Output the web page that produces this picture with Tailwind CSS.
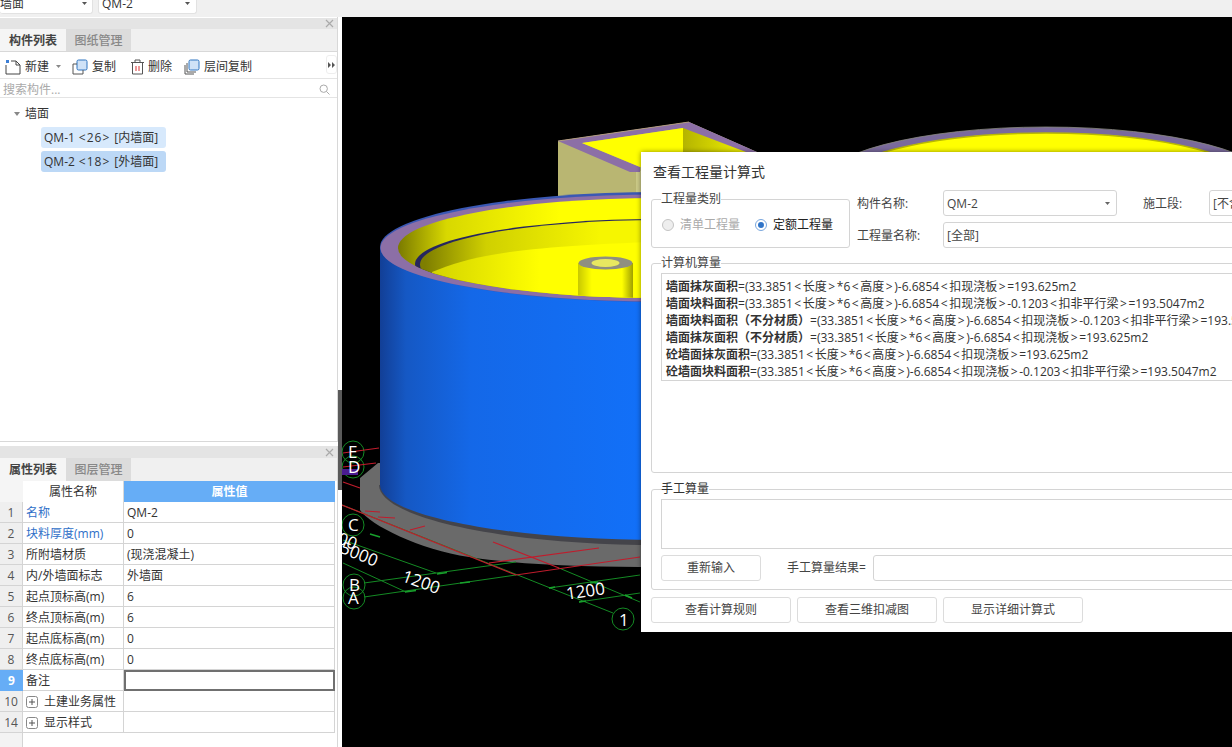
<!DOCTYPE html>
<html><head><meta charset="utf-8"><script src="https://cdn.jsdelivr.net/npm/@tailwindcss/browser@4"></script></head>
<body class="m-0 overflow-hidden bg-black">
<div class="w-[1232px] h-[747px] flex flex-col overflow-hidden text-[12px] text-[#333] font-['Open_Sans','Noto_Sans_CJK_SC',sans-serif]">
  <div class="h-[17px] shrink-0 bg-[#f0f0f0] flex items-start gap-[5px] overflow-hidden">
    <div class="w-[93px] h-[20px] -mt-[6px] bg-white rounded-b-[3px] border-b border-r border-[#e2e2e2] flex items-center justify-between pr-[5px]"><span>墙面</span><svg class="w-[5px] h-[3px]" viewBox="0 0 5 3"><path d="M0 0H5L2.500 3Z" fill="#555"/></svg></div>
    <div class="w-[99px] h-[20px] -mt-[6px] bg-white rounded-b-[3px] border border-t-0 border-[#e2e2e2] flex items-center justify-between pl-[3px] pr-[6px]"><span>QM-2</span><svg class="w-[5px] h-[3px]" viewBox="0 0 5 3"><path d="M0 0H5L2.500 3Z" fill="#555"/></svg></div>
  </div>
  <div class="flex-1 flex min-h-0 relative">
    <aside class="w-[342px] shrink-0 flex flex-col bg-white relative">
      <section class="h-[425px] flex flex-col w-[338px] border-r border-[#d8d8d8]">
        <div class="h-[11px] mt-[1px] bg-[#e4e4e4] flex items-center justify-end pr-[3px] shrink-0"><svg class="w-[9px] h-[9px]" viewBox="0 0 9 9"><path d="M1 1l7 7M8 1l-7 7" stroke="#aaa" stroke-width="1.2"/></svg></div>
        <div class="h-[23px] flex bg-[#f0f0f0] shrink-0 border-b border-[#d8d8d8]">
          <div class="w-[66px] bg-[#f5f5f5] flex items-center justify-center pt-[2px] font-bold text-[#444]">构件列表</div>
          <div class="w-[65px] bg-[#dcdcdc] flex items-center justify-center pt-[2px] text-[#888] font-medium">图纸管理</div>
        </div>
        <div class="h-[27px] flex items-center shrink-0 border-b border-[#e4e4e4] bg-white relative pt-[3px]">
          <svg class="w-[16px] h-[16px] ml-[5px]" viewBox="0 0 16 16" fill="none"><path d="M6 2H11L15 6V15H1V6" stroke="#444"/><path d="M11 2V6H15" stroke="#444"/><rect x="1" y="1" width="3" height="3" fill="#3d7fd6"/></svg>
          <span class="ml-[4px]">新建</span><svg class="ml-[7px] w-[5px] h-[3px]" viewBox="0 0 5 3"><path d="M0 0H5L2.500 3Z" fill="#888"/></svg>
          <svg class="w-[16px] h-[16px] ml-[11px]" viewBox="0 0 16 16" fill="none"><rect x="5" y="1" width="10" height="10" rx="1.500" fill="#cfe2f7" stroke="#2f74c0"/><path d="M5 5H1V15H11V11" stroke="#555"/></svg>
          <span class="ml-[4px]">复制</span>
          <svg class="w-[15px] h-[16px] ml-[14px]" viewBox="0 0 15 16" fill="none"><path d="M1 3.500H14M5 3V1H10V3M2.500 4V15H12.500V4" stroke="#555"/><path d="M6 7V12M9 7V12" stroke="#d33"/></svg>
          <span class="ml-[3px]">删除</span>
          <svg class="w-[16px] h-[16px] ml-[12px]" viewBox="0 0 16 16" fill="none"><rect x="5" y="1" width="10" height="10" rx="1.500" fill="#cfe2f7" stroke="#2f74c0"/><path d="M3 4V13H12M1 6V15H10" stroke="#555"/></svg>
          <span class="ml-[4px]">层间复制</span>
          <div class="absolute right-0 top-[3px] w-[11px] h-[19px] border border-[#eee] rounded-[3px] flex items-center justify-center"><svg class="w-[7px] h-[6px]" viewBox="0 0 7 6"><path d="M0 0L3 3L0 6ZM4 0L7 3L4 6Z" fill="#555"/></svg></div>
        </div>
        <div class="h-[19px] flex items-center justify-between shrink-0 border-b border-[#e4e4e4] pl-[3px] pr-[7px] pt-[3px] text-[#aaa]"><span>搜索构件...</span><svg class="w-[11px] h-[11px]" viewBox="0 0 11 11" fill="none"><circle cx="4.700" cy="4.700" r="3.700" stroke="#aaa"/><path d="M7.500 7.500L10.500 10.500" stroke="#aaa"/></svg></div>
        <div class="flex-1 flex flex-col border-b border-[#d8d8d8] pt-[5px]">
          <div class="flex items-center h-[20px] pl-[14px] pt-[2px] gap-[5px]"><svg class="w-[6px] h-[4px]" viewBox="0 0 6 4"><path d="M0 0H6L3 4Z" fill="#888"/></svg><span>墙面</span></div>
          <div class="ml-[41px] mt-[4px] w-[125px] h-[21px] bg-[#d7e9fc] rounded-[3px] flex items-center gap-[4px] px-[3px] whitespace-nowrap"><span>QM-1</span><span class="tracking-[1px]">&lt;26&gt;</span><span>[内墙面]</span></div>
          <div class="ml-[41px] mt-[3px] w-[125px] h-[21px] bg-[#bcd8f6] rounded-[3px] flex items-center gap-[4px] px-[3px] whitespace-nowrap"><span>QM-2</span><span class="tracking-[1px]">&lt;18&gt;</span><span>[外墙面]</span></div>
        </div>
      </section>
      <div class="h-[4px] shrink-0"></div>
      <section class="flex-1 flex flex-col w-[338px] border-r border-[#d8d8d8] min-h-0">
        <div class="h-[12px] bg-[#e4e4e4] flex items-center justify-end pr-[3px] shrink-0"><svg class="w-[9px] h-[9px]" viewBox="0 0 9 9"><path d="M1 1l7 7M8 1l-7 7" stroke="#aaa" stroke-width="1.2"/></svg></div>
        <div class="h-[23px] flex bg-[#f0f0f0] shrink-0">
          <div class="w-[66px] bg-[#f5f5f5] flex items-center justify-center pt-[1px] font-bold text-[#444]">属性列表</div>
          <div class="w-[65px] bg-[#dcdcdc] flex items-center justify-center pt-[1px] text-[#888] font-medium">图层管理</div>
        </div>
        <div class="flex-1 grid grid-cols-[23px_101px_211px] grid-rows-[21px_repeat(13,21px)_1fr] bg-white [&>div]:pt-[1px]">
          <div class="bg-[#f5f5f5]"></div><div class="flex items-center justify-center border-r border-[#d8d8d8]">属性名称</div><div class="bg-[#66adf6] text-white font-bold flex items-center justify-center">属性值</div>
          <div class="bg-[#efefef] border-r border-b border-[#d4d4d4] flex items-center justify-center text-[#555]">1</div><div class="border-r border-b border-[#d4d4d4] flex items-center pl-[3px] text-[#2f6fc8]">名称</div><div class="border-r border-b border-[#d4d4d4] flex items-center pl-[3px]">QM-2</div>
          <div class="bg-[#efefef] border-r border-b border-[#d4d4d4] flex items-center justify-center text-[#555]">2</div><div class="border-r border-b border-[#d4d4d4] flex items-center pl-[3px] text-[#2f6fc8]">块料厚度(mm)</div><div class="border-r border-b border-[#d4d4d4] flex items-center pl-[3px]">0</div>
          <div class="bg-[#efefef] border-r border-b border-[#d4d4d4] flex items-center justify-center text-[#555]">3</div><div class="border-r border-b border-[#d4d4d4] flex items-center pl-[3px]">所附墙材质</div><div class="border-r border-b border-[#d4d4d4] flex items-center pl-[3px]">(现浇混凝土)</div>
          <div class="bg-[#efefef] border-r border-b border-[#d4d4d4] flex items-center justify-center text-[#555]">4</div><div class="border-r border-b border-[#d4d4d4] flex items-center pl-[3px]">内/外墙面标志</div><div class="border-r border-b border-[#d4d4d4] flex items-center pl-[3px]">外墙面</div>
          <div class="bg-[#efefef] border-r border-b border-[#d4d4d4] flex items-center justify-center text-[#555]">5</div><div class="border-r border-b border-[#d4d4d4] flex items-center pl-[3px]">起点顶标高(m)</div><div class="border-r border-b border-[#d4d4d4] flex items-center pl-[3px]">6</div>
          <div class="bg-[#efefef] border-r border-b border-[#d4d4d4] flex items-center justify-center text-[#555]">6</div><div class="border-r border-b border-[#d4d4d4] flex items-center pl-[3px]">终点顶标高(m)</div><div class="border-r border-b border-[#d4d4d4] flex items-center pl-[3px]">6</div>
          <div class="bg-[#efefef] border-r border-b border-[#d4d4d4] flex items-center justify-center text-[#555]">7</div><div class="border-r border-b border-[#d4d4d4] flex items-center pl-[3px]">起点底标高(m)</div><div class="border-r border-b border-[#d4d4d4] flex items-center pl-[3px]">0</div>
          <div class="bg-[#efefef] border-r border-b border-[#d4d4d4] flex items-center justify-center text-[#555]">8</div><div class="border-r border-b border-[#d4d4d4] flex items-center pl-[3px]">终点底标高(m)</div><div class="border-r border-b border-[#d4d4d4] flex items-center pl-[3px]">0</div>
          <div class="bg-[#66adf6] text-white font-bold flex items-center justify-center">9</div><div class="border-r border-b border-[#d4d4d4] flex items-center pl-[3px]">备注</div><div class="border-2 border-[#707070] bg-white"></div>
          <div class="bg-[#efefef] border-r border-b border-[#d4d4d4] flex items-center justify-center text-[#555]">10</div><div class="border-r border-b border-[#d4d4d4] flex items-center pl-[3px] gap-[6px]"><svg class="w-[12px] h-[12px]" viewBox="0 0 12 12" fill="none"><rect x=".5" y=".5" width="11" height="11" rx="2" stroke="#888"/><path d="M3 6H9M6 3V9" stroke="#555"/></svg>土建业务属性</div><div class="border-r border-b border-[#d4d4d4]"></div>
          <div class="bg-[#efefef] border-r border-b border-[#d4d4d4] flex items-center justify-center text-[#555]">14</div><div class="border-r border-b border-[#d4d4d4] flex items-center pl-[3px] gap-[6px]"><svg class="w-[12px] h-[12px]" viewBox="0 0 12 12" fill="none"><rect x=".5" y=".5" width="11" height="11" rx="2" stroke="#888"/><path d="M3 6H9M6 3V9" stroke="#555"/></svg>显示样式</div><div class="border-r border-b border-[#d4d4d4]"></div>
          <div class="bg-[#f3f3f3] border-r border-[#d4d4d4]"></div>
        </div>
      </section>
      <div class="absolute right-0 top-[373px] w-[4px] h-[100px] bg-[#5a5a5a]"></div>
    </aside>
    <main class="flex-1 relative bg-black overflow-hidden">
      <svg class="absolute inset-0 w-[890px] h-[730px]" viewBox="342 17 890 730" fill="none">
        <defs>
          <linearGradient id="bl" gradientUnits="userSpaceOnUse" x1="380" x2="640" y1="0" y2="0"><stop offset="0" stop-color="#123f96"/><stop offset=".1" stop-color="#1558c4"/><stop offset=".35" stop-color="#1468e8"/><stop offset="1" stop-color="#1270f8"/></linearGradient>
          <linearGradient id="ye" gradientUnits="userSpaceOnUse" x1="398" x2="560" y1="0" y2="0"><stop offset="0" stop-color="#7a7a00"/><stop offset=".3" stop-color="#d8d800"/><stop offset="1" stop-color="#ffff00"/></linearGradient>
          <linearGradient id="fl" gradientUnits="userSpaceOnUse" x1="425" x2="600" y1="0" y2="0"><stop offset="0" stop-color="#7e7e00"/><stop offset=".35" stop-color="#d0d000"/><stop offset="1" stop-color="#f6f600"/></linearGradient>
          <linearGradient id="fb" gradientUnits="userSpaceOnUse" x1="432" x2="540" y1="0" y2="0"><stop offset="0" stop-color="#d4d400"/><stop offset="1" stop-color="#ffff00"/></linearGradient>
          <linearGradient id="ye2" gradientUnits="userSpaceOnUse" x1="578" x2="633" y1="0" y2="0"><stop offset="0" stop-color="#c8c800"/><stop offset=".25" stop-color="#ffff00"/><stop offset=".8" stop-color="#ffff00"/><stop offset="1" stop-color="#a0a000"/></linearGradient>
          <linearGradient id="wl" gradientUnits="userSpaceOnUse" x1="683" x2="745" y1="0" y2="0"><stop offset="0" stop-color="#b4b400"/><stop offset="1" stop-color="#f0f000"/></linearGradient>
          <clipPath id="inner"><ellipse cx="660" cy="248" rx="262" ry="50"/></clipPath>
        </defs>
        <ellipse cx="1046" cy="187" rx="229" ry="60" fill="#7a6a9c" stroke="#8a8a80" stroke-width=".8"/>
        <ellipse cx="1046" cy="187" rx="212" ry="54" fill="#ffff00" stroke="#b8b800" stroke-width="1.500"/>
        <polygon points="558,141 689,122 757,152 757,200 558,200" fill="#b9b672"/>
        <polygon points="636,171 641,171 641,200 636,200" fill="#cdcb88"/>
        <polygon points="683,127 750,152 750,175 683,175" fill="url(#wl)"/>
        <polygon points="558,141 689,122 757,152 746,152 683,128 582,143 640,167 640,172 630,172" fill="#8c6fa6"/>
        <polygon points="582,143 683,128 683,175 640,167" fill="#ffff00"/>
        <path d="M558 141L689 122" stroke="#b09a80" stroke-width="1"/>
        <path d="M360 478 L378 463 H700 V567 H660 C 590 567, 520 565, 469 557 C 420 550, 370 525, 360 510Z" fill="#6a6a6a"/>
        <path d="M379 485 C 379 518, 505 545, 660 545 H700 V530 L379 485Z" fill="#44444a"/>
        <path d="M380 247 V485 C 380 515, 505 540, 660 540 H700 V247Z" fill="url(#bl)"/>
        <ellipse cx="660" cy="247" rx="280" ry="55" fill="#3a58b4"/>
        <ellipse cx="660" cy="248" rx="279.500" ry="53.500" fill="#8c6fa6"/>
        <ellipse cx="660" cy="248" rx="262" ry="50" fill="url(#ye)"/>
        <g clip-path="url(#inner)">
          <ellipse cx="660" cy="264" rx="245" ry="45" fill="#26265e"/>
          <ellipse cx="662" cy="264.500" rx="242" ry="44.500" fill="url(#fl)"/>
          <path d="M432 272 C 480 252, 530 246, 700 240 V310 H432Z" fill="url(#fb)"/>
          <path d="M578 263 V300 H633 V263Z" fill="url(#ye2)"/>
          <ellipse cx="605.500" cy="263" rx="27" ry="6.500" fill="#8f8f80"/>
          <ellipse cx="605.500" cy="263" rx="14" ry="4" fill="#e8e860"/>
        </g>
        <g stroke="#148a24" stroke-width="1">
          <path d="M342 505L613 613M343 540L436 573M343 563L406 592M559 568L640 602"/>
          <path d="M364 583L516 562M364 597L516 575M549 588L640 575M579 602L640 593"/>
          <circle cx="353" cy="452" r="11"/><circle cx="353" cy="467" r="11"/><circle cx="353" cy="525" r="11"/><circle cx="354" cy="585" r="11"/><circle cx="354" cy="598" r="11"/><circle cx="623" cy="619" r="11"/>
        </g>
        <g stroke="#18a02c" stroke-width="1.600">
          <path d="M437 574L447 572.500M460 583L470 582M405 592L416 590.500M549 588L555 587M579 602L586 601M590 583L598 582M625 595L632 598M370 534L380 537"/>
        </g>
        <g stroke="#c01c2c" stroke-width="1.200">
          <path d="M342 505L516 575L640 557M343 453L379 448M343 467L376 463M343 482L360 488M493 542L559 568M489 563L599 548M365 511L380 512M378 517L395 518M410 530L425 526"/>
        </g>
        <rect x="342" y="469" width="16" height="6" fill="#4a1c90"/>
      </svg>
      <span class="absolute left-[6px] top-[426px] text-white text-[17px] leading-none">E</span>
      <span class="absolute left-[6px] top-[441px] text-white text-[17px] leading-none">D</span>
      <span class="absolute left-[6px] top-[499px] text-white text-[17px] leading-none">C</span>
      <span class="absolute left-[7px] top-[559px] text-white text-[17px] leading-none">B</span>
      <span class="absolute left-[6px] top-[572px] text-white text-[17px] leading-none">A</span>
      <span class="absolute left-[277px] top-[594px] text-white text-[17px] leading-none">1</span>
      <span class="absolute left-[60px] top-[556px] text-white text-[17px] leading-none rotate-[20deg]">1200</span>
      <span class="absolute left-[224px] top-[565px] text-white text-[17px] leading-none -rotate-[8deg]">1200</span>
      <span class="absolute -left-[2px] top-[528px] text-white text-[17px] leading-none rotate-[22deg]">5000</span>
      <span class="absolute -left-[4px] top-[515px] text-white text-[17px] leading-none rotate-[22deg]">00</span>
    </main>
    <div class="absolute left-[641px] top-[135px] w-[591px] h-[480px] bg-white flex flex-col pl-[10px] text-[#444] shadow-[0_0_5px_rgba(0,0,0,0.45)]">
      <div class="h-[39px] shrink-0 flex items-center pl-[2px] text-[14px] text-[#333]">查看工程量计算式</div>
      <div class="flex gap-[7px] h-[58px] shrink-0">
        <fieldset class="w-[199px] h-[49px] border border-[#d4d4d4] rounded-[3px] shrink-0 mt-[8px] relative">
          <span class="absolute left-[9px] -top-[8px] bg-white leading-[14px]">工程量类别</span>
          <div class="flex items-center h-full pl-[10px] pt-[2px]">
            <span class="w-[12px] h-[12px] rounded-full border border-[#c4c4c4] bg-[#eee]"></span><span class="ml-[6px] text-[#aaa]">清单工程量</span>
            <span class="ml-[15px] w-[12px] h-[12px] rounded-full border border-[#7aa7dd] flex items-center justify-center"><span class="w-[6px] h-[6px] rounded-full bg-[#2f74c8]"></span></span><span class="ml-[6px] text-[#222]">定额工程量</span>
          </div>
        </fieldset>
        <div class="flex-1 flex flex-col gap-[6px] -mt-[1px]">
          <div class="flex items-center h-[26px]"><span class="w-[86px] pt-[1px]">构件名称:</span><div class="w-[174px] h-[26px] border border-[#d4d4d4] rounded-[3px] flex items-center justify-between px-[3px] pr-[6px]"><span class="pt-[1px]">QM-2</span><svg class="w-[5px] h-[3px]" viewBox="0 0 5 3"><path d="M0 0H5L2.500 3Z" fill="#666"/></svg></div><span class="ml-[26px] w-[66px] pt-[1px]">施工段:</span><div class="w-[60px] h-[26px] border border-[#d4d4d4] rounded-[3px] flex items-center pt-[1px] px-[3px] overflow-hidden whitespace-nowrap">[不含]</div></div>
          <div class="flex items-center h-[26px]"><span class="w-[86px] pt-[1px]">工程量名称:</span><div class="w-[300px] h-[26px] border border-[#d4d4d4] rounded-[3px] flex items-center pt-[1px] px-[3px]">[全部]</div></div>
        </div>
      </div>
      <fieldset class="mt-[14px] h-[210px] w-[600px] shrink-0 border border-[#d4d4d4] rounded-[3px] relative p-[9px]">
        <span class="absolute left-[9px] -top-[8px] bg-white leading-[14px]">计算机算量</span>
        <div class="h-full border border-[#d4d4d4] pt-[4px] pl-[4px] whitespace-nowrap text-[#333] leading-[17px] overflow-hidden [&>div]:h-[17px]">
          <div><b>墙面抹灰面积</b>=(33.3851<span class="inline-block w-[10px] text-center">&lt;</span>长度<span class="inline-block w-[10px] text-center">&gt;</span>*6<span class="inline-block w-[10px] text-center">&lt;</span>高度<span class="inline-block w-[10px] text-center">&gt;</span>)-6.6854<span class="inline-block w-[10px] text-center">&lt;</span>扣现浇板<span class="inline-block w-[10px] text-center">&gt;</span>=193.625m2</div>
          <div><b>墙面块料面积</b>=(33.3851<span class="inline-block w-[10px] text-center">&lt;</span>长度<span class="inline-block w-[10px] text-center">&gt;</span>*6<span class="inline-block w-[10px] text-center">&lt;</span>高度<span class="inline-block w-[10px] text-center">&gt;</span>)-6.6854<span class="inline-block w-[10px] text-center">&lt;</span>扣现浇板<span class="inline-block w-[10px] text-center">&gt;</span>-0.1203<span class="inline-block w-[10px] text-center">&lt;</span>扣非平行梁<span class="inline-block w-[10px] text-center">&gt;</span>=193.5047m2</div>
          <div><b>墙面块料面积（不分材质）</b>=(33.3851<span class="inline-block w-[10px] text-center">&lt;</span>长度<span class="inline-block w-[10px] text-center">&gt;</span>*6<span class="inline-block w-[10px] text-center">&lt;</span>高度<span class="inline-block w-[10px] text-center">&gt;</span>)-6.6854<span class="inline-block w-[10px] text-center">&lt;</span>扣现浇板<span class="inline-block w-[10px] text-center">&gt;</span>-0.1203<span class="inline-block w-[10px] text-center">&lt;</span>扣非平行梁<span class="inline-block w-[10px] text-center">&gt;</span>=193.5047m2</div>
          <div><b>墙面抹灰面积（不分材质）</b>=(33.3851<span class="inline-block w-[10px] text-center">&lt;</span>长度<span class="inline-block w-[10px] text-center">&gt;</span>*6<span class="inline-block w-[10px] text-center">&lt;</span>高度<span class="inline-block w-[10px] text-center">&gt;</span>)-6.6854<span class="inline-block w-[10px] text-center">&lt;</span>扣现浇板<span class="inline-block w-[10px] text-center">&gt;</span>=193.625m2</div>
          <div><b>砼墙面抹灰面积</b>=(33.3851<span class="inline-block w-[10px] text-center">&lt;</span>长度<span class="inline-block w-[10px] text-center">&gt;</span>*6<span class="inline-block w-[10px] text-center">&lt;</span>高度<span class="inline-block w-[10px] text-center">&gt;</span>)-6.6854<span class="inline-block w-[10px] text-center">&lt;</span>扣现浇板<span class="inline-block w-[10px] text-center">&gt;</span>=193.625m2</div>
          <div><b>砼墙面块料面积</b>=(33.3851<span class="inline-block w-[10px] text-center">&lt;</span>长度<span class="inline-block w-[10px] text-center">&gt;</span>*6<span class="inline-block w-[10px] text-center">&lt;</span>高度<span class="inline-block w-[10px] text-center">&gt;</span>)-6.6854<span class="inline-block w-[10px] text-center">&lt;</span>扣现浇板<span class="inline-block w-[10px] text-center">&gt;</span>-0.1203<span class="inline-block w-[10px] text-center">&lt;</span>扣非平行梁<span class="inline-block w-[10px] text-center">&gt;</span>=193.5047m2</div>
        </div>
      </fieldset>
      <fieldset class="mt-[16px] h-[101px] w-[600px] shrink-0 border border-[#d4d4d4] rounded-[3px] relative px-[9px] pt-[9px]">
        <span class="absolute left-[9px] -top-[8px] bg-white leading-[14px] text-[#333]">手工算量</span>
        <div class="h-[50px] border border-[#d4d4d4]"></div>
        <div class="flex items-center mt-[6px]">
          <button class="w-[100px] h-[26px] border border-[#dcdcdc] rounded-[3px]">重新输入</button>
          <span class="ml-[26px]">手工算量结果=</span>
          <div class="ml-[7px] h-[26px] flex-1 border border-[#d4d4d4] rounded-[3px]"></div>
        </div>
      </fieldset>
      <div class="flex gap-[6px] mt-[7px]">
        <button class="w-[140px] h-[26px] border border-[#dcdcdc] rounded-[3px]">查看计算规则</button>
        <button class="w-[140px] h-[26px] border border-[#dcdcdc] rounded-[3px]">查看三维扣减图</button>
        <button class="w-[140px] h-[26px] border border-[#dcdcdc] rounded-[3px]">显示详细计算式</button>
      </div>
    </div>
  </div>
</div>
</body></html>
